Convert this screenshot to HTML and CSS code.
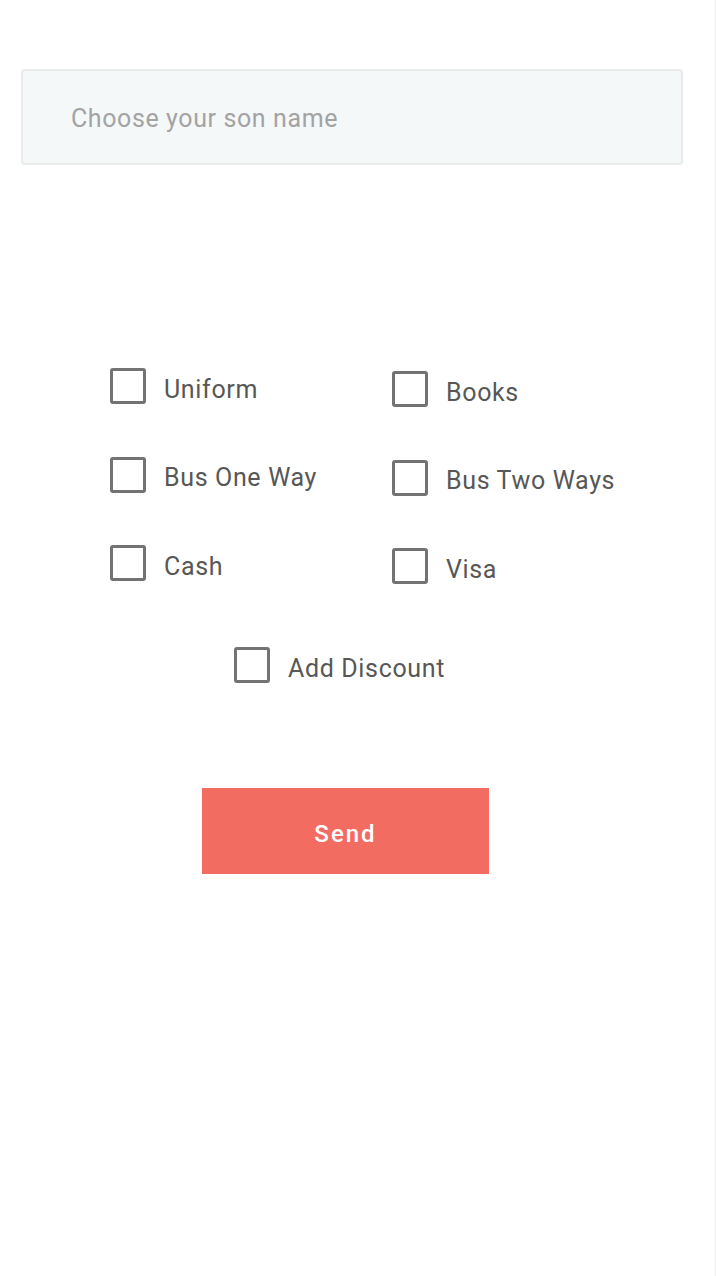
FILE: index.html
```html
<!DOCTYPE html>
<html lang="en">
<head>
<meta charset="utf-8">
<title>Form</title>
<link rel="stylesheet" href="styles.css">
</head>
<body>
<div class="page">
  <div class="field">
    <span class="placeholder">Choose your son name</span>
  </div>

  <div class="options">
    <label class="opt"><span class="box"></span><span class="txt">Uniform</span></label>
    <label class="opt right"><span class="box"></span><span class="txt">Books</span></label>
    <label class="opt"><span class="box"></span><span class="txt">Bus One Way</span></label>
    <label class="opt right"><span class="box"></span><span class="txt">Bus Two Ways</span></label>
    <label class="opt"><span class="box"></span><span class="txt">Cash</span></label>
    <label class="opt right"><span class="box"></span><span class="txt">Visa</span></label>
  </div>

  <div class="discount">
    <label class="opt"><span class="box"></span><span class="txt">Add Discount</span></label>
  </div>

  <div class="actions">
    <button class="send" type="button">Send</button>
  </div>
</div>
</body>
</html>
```

FILE: styles.css
```css
html, body {
  margin: 0;
  padding: 0;
  background: #ffffff;
}

body {
  font-family: Roboto, "Liberation Sans", Arial, sans-serif;
}

.page {
  box-sizing: border-box;
  width: 716px;
  min-height: 1276px;
  border-right: 1px solid #ececec;
  padding-top: 69px;
}

.field {
  box-sizing: border-box;
  margin-left: 21px;
  width: 662px;
  height: 96px;
  background: #f5f8f9;
  border: 2px solid #e9ebeb;
  border-radius: 4px;
  display: flex;
  align-items: center;
  padding-left: 48px;
}

.placeholder {
  font-size: 25px;
  letter-spacing: 0.6px;
  color: #a3a3a3;
  padding-top: 2px;
}

.options {
  margin-top: 203px;
  padding-left: 110px;
  display: grid;
  grid-template-columns: 282px 1fr;
  grid-auto-rows: 36px;
  row-gap: 52.5px;
}

.opt {
  display: flex;
  align-items: flex-start;
  gap: 18px;
  height: 36px;
}

.opt.right {
  margin-top: 3px;
}

.box {
  box-sizing: border-box;
  width: 36px;
  height: 36px;
  border: 3px solid #737373;
  border-radius: 3px;
  flex: none;
}

.txt {
  font-size: 25px;
  letter-spacing: 0.65px;
  line-height: 36px;
  color: #575757;
  padding-top: 3.5px;
  white-space: nowrap;
}

.discount {
  margin-top: 66px;
  padding-left: 234px;
  display: flex;
}

.actions {
  margin-top: 105px;
  padding-left: 202px;
  display: flex;
}

.send {
  width: 287px;
  height: 86px;
  background: #f26c62;
  border: none;
  border-radius: 0;
  color: #ffffff;
  font-family: Roboto, "Liberation Sans", Arial, sans-serif;
  font-size: 24px;
  font-weight: 500;
  letter-spacing: 2px;
  padding: 6px 0 0 0;
}
```
